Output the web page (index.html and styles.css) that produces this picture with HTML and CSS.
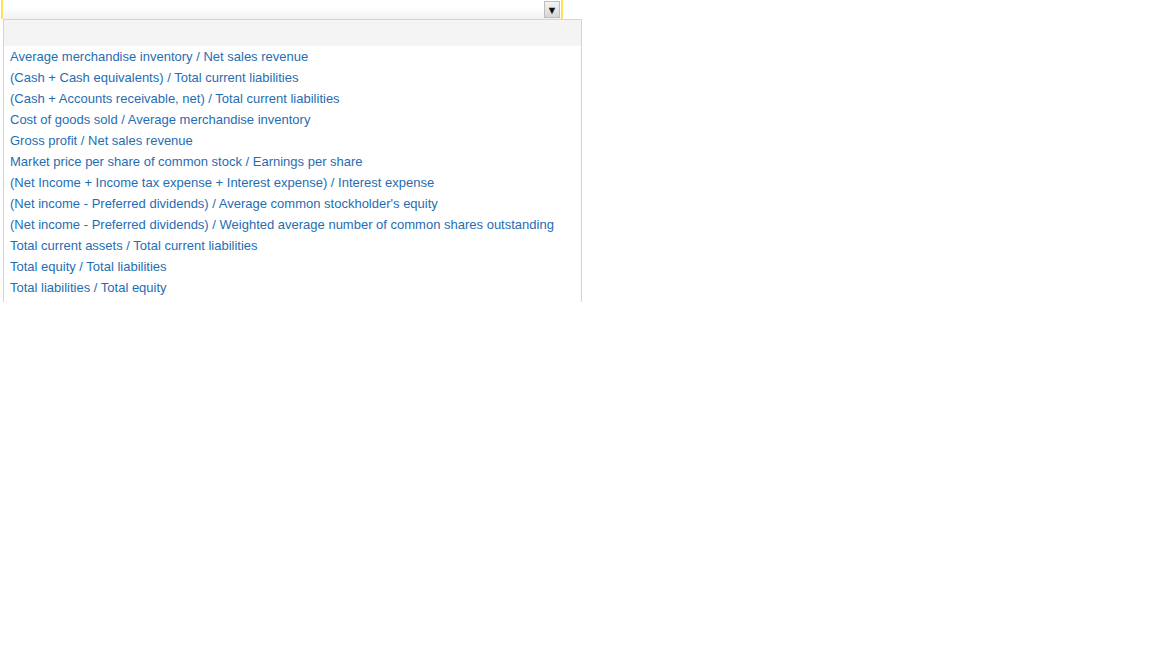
FILE: index.html
```html
<!DOCTYPE html>
<html lang="en">
  <head>
    <meta charset="UTF-8" />
    <meta name="viewport" content="width=device-width, initial-scale=1.0" />
    <title>Formula</title>
    <link rel="stylesheet" href="styles.css">
  </head>

  <body>
    <div class="combo">
      <div class="field"></div>
      <span class="arrow">&#9660;</span>
    </div>
    <ul class="list">
      <li class="blank"></li>
      <li>Average merchandise inventory / Net sales revenue</li>
      <li>(Cash + Cash equivalents) / Total current liabilities</li>
      <li>(Cash + Accounts receivable, net) / Total current liabilities</li>
      <li>Cost of goods sold / Average merchandise inventory</li>
      <li>Gross profit / Net sales revenue</li>
      <li>Market price per share of common stock / Earnings per share</li>
      <li>(Net Income + Income tax expense + Interest expense) / Interest expense</li>
      <li>(Net income - Preferred dividends) / Average common stockholder's equity</li>
      <li>(Net income - Preferred dividends) / Weighted average number of common shares outstanding</li>
      <li>Total current assets / Total current liabilities</li>
      <li>Total equity / Total liabilities</li>
      <li>Total liabilities / Total equity</li>
    </ul>
  </body>
</html>
```

FILE: styles.css
```css
* {
  margin: 0;
  padding: 0;
  box-sizing: border-box;
}

body {
  background: #fff;
  font-family: "Liberation Sans", Arial, sans-serif;
  font-size: 13px;
}

.combo {
  display: flex;
  align-items: center;
  width: 562px;
  height: 19px;
  margin-left: 1px;
  padding: 1px 1px 1px 0;
  border-left: 2px solid #fde35a;
  border-right: 2px solid #fde35a;
  background: linear-gradient(to bottom, #fff 40%, #f2f2f2);
}

.field {
  flex: 1;
}

.arrow {
  width: 16px;
  height: 17px;
  border: 1px solid #bdbdbd;
  background: linear-gradient(to bottom, #f4f4f4, #d6d6d6);
  color: #111;
  font-size: 11px;
  line-height: 16px;
  text-align: center;
}

.list {
  list-style: none;
  width: 579px;
  height: 283px;
  margin-left: 3px;
  border: 1px solid #d4d4d4;
  border-bottom: none;
  overflow: hidden;
}

.list li {
  height: 21px;
  padding-left: 6px;
  line-height: 21px;
  color: #1f6db3;
  white-space: nowrap;
}

.list .blank {
  height: 26px;
  background: #f4f4f4;
}
```
